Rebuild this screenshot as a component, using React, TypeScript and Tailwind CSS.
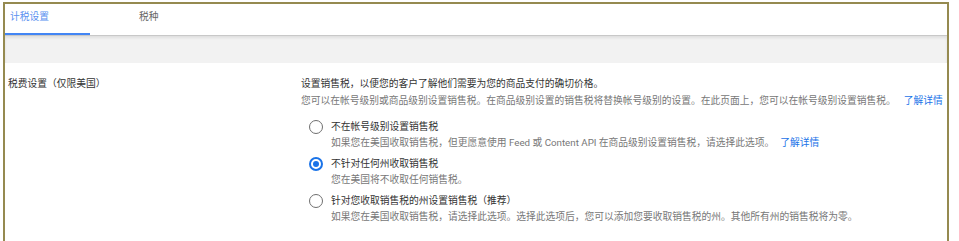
import { useState } from "react";

const options = [
  {
    id: "none",
    label: "不在帐号级别设置销售税",
    desc: "如果您在美国收取销售税，但更愿意使用 Feed 或 Content API 在商品级别设置销售税，请选择此选项。",
    link: true,
  },
  {
    id: "noState",
    label: "不针对任何州收取销售税",
    desc: "您在美国将不收取任何销售税。",
    link: false,
  },
  {
    id: "states",
    label: "针对您收取销售税的州设置销售税（推荐）",
    desc: "如果您在美国收取销售税，请选择此选项。选择此选项后，您可以添加您要收取销售税的州。其他所有州的销售税将为零。",
    link: false,
  },
];

const Radio = ({ checked }: { checked: boolean }) => (
  <span
    className={
      checked
        ? "flex h-[14px] w-[14px] shrink-0 items-center justify-center rounded-full border-[2px] border-[#1a73e8]"
        : "flex h-[14px] w-[14px] shrink-0 items-center justify-center rounded-full border-[1.5px] border-[#6f6f6f]"
    }
  >
    {checked && <span className="h-[6px] w-[6px] rounded-full bg-[#1a73e8]" />}
  </span>
);

export default function App() {
  const [selected, setSelected] = useState("noState");

  return (
    <div className="h-[241px] w-[959px] overflow-hidden bg-white pl-[3px] pr-[10px] pt-[2px] font-['Roboto','Noto_Sans_CJK_SC',sans-serif] text-[9.75px]">
      <div className="h-[260px] border-[2px] border-b-0 border-[#958a50]">
        {/* tabs */}
        <div className="flex h-[32px] border-b border-[#c8c8c8]">
          <div className="flex w-[85px] flex-col justify-between">
            <span className="pl-[5px] pt-[6px] leading-[14px] text-[#5b91f0]">计税设置</span>
            <span className="h-[2px] bg-[#4285f4]" />
          </div>
          <span className="pl-[49px] pt-[6px] leading-[14px] text-[#666]">税种</span>
        </div>

        {/* gray band */}
        <div className="h-[27px] bg-[#f2f2f2] shadow-[inset_0_2px_3px_rgba(0,0,0,0.08)]" />

        {/* settings */}
        <div className="flex pt-[12px]">
          <div className="w-[296px] pl-[3px] leading-[17px] text-[#333]">税费设置（仅限美国）</div>
          <div className="flex-1">
            <p className="leading-[17px] text-[#333]">设置销售税，以便您的客户了解他们需要为您的商品支付的确切价格。</p>
            <p className="leading-[17px] text-[#777]">
              您可以在帐号级别或商品级别设置销售税。在商品级别设置的销售税将替换帐号级别的设置。在此页面上，您可以在帐号级别设置销售税。
              <a className="ml-[8px] text-[#1a73e8]">了解详情</a>
            </p>

            <div className="mt-[10px] flex flex-col gap-[5px] pl-[8px]">
              {options.map((o) => (
                <label key={o.id} className="flex cursor-pointer gap-[8px]" onClick={() => setSelected(o.id)}>
                  <span className="flex h-[16px] items-center">
                    <Radio checked={selected === o.id} />
                  </span>
                  <span className="flex flex-col leading-[16px]">
                    <span className="text-[#333]">{o.label}</span>
                    <span className="text-[#777]">
                      {o.desc}
                      {o.link && <a className="ml-[6px] text-[#1a73e8]">了解详情</a>}
                    </span>
                  </span>
                </label>
              ))}
            </div>
          </div>
        </div>
      </div>
    </div>
  );
}
